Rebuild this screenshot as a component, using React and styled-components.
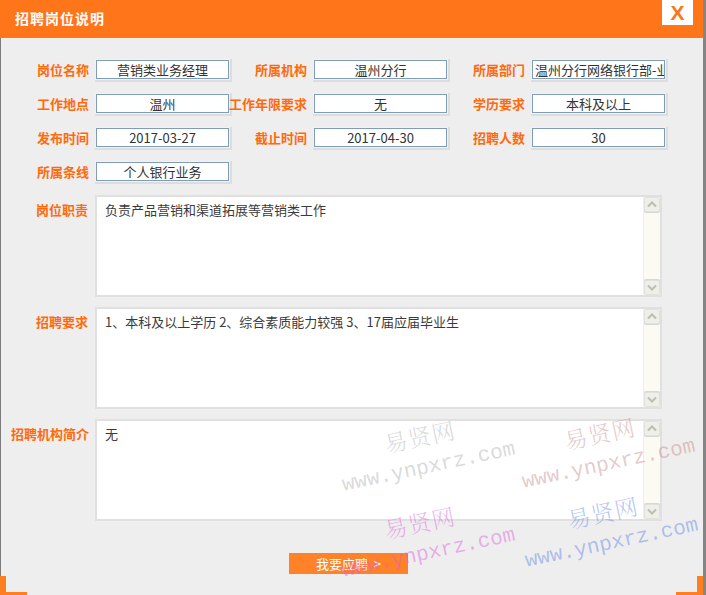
import React from "react";
import styled, { createGlobalStyle } from "styled-components";

const GlobalStyle = createGlobalStyle`
  html, body {
    margin: 0;
    padding: 0;
  }
  body {
    width: 706px;
    height: 595px;
    overflow: hidden;
    background: #858585;
    font-family: "Noto Sans CJK SC", "Liberation Sans", sans-serif;
  }
`;

const Dialog = styled.div`
  position: relative;
  width: 703px;
  height: 595px;
  background: #eeeeee;
  overflow: hidden;
  display: flex;
  flex-direction: column;
`;

const Header = styled.div`
  height: 38px;
  flex-shrink: 0;
  display: flex;
  justify-content: space-between;
  align-items: flex-start;
  padding-left: 15px;
  background: #ff7519;
`;

const Title = styled.h1`
  margin: 0;
  font-size: 14px;
  font-weight: bold;
  line-height: 36px;
  letter-spacing: 1px;
  color: #fff;
`;

const Close = styled.button`
  width: 31px;
  height: 25px;
  margin-right: 10px;
  padding: 0;
  border: 0;
  background: #fff;
  color: #ff7519;
  font-family: "Liberation Sans", Arial, sans-serif;
  font-size: 21px;
  font-weight: bold;
  line-height: 25px;
  cursor: pointer;
`;

const Body = styled.div`
  flex: 1;
  padding: 22px 0 0 10px;
  border-left: 1px solid #7c7c7c;
`;

const FieldGrid = styled.div`
  display: grid;
  grid-template-columns: repeat(3, 218px);
  grid-auto-rows: 19px;
  row-gap: 15px;
`;

const Field = styled.div`
  display: flex;
  align-items: center;
  height: 19px;
`;

const Label = styled.label`
  flex-shrink: 0;
  width: 78px;
  margin-right: 7px;
  text-align: right;
  font-size: 13px;
  font-weight: bold;
  line-height: 19px;
  color: #ff6a0c;
  white-space: nowrap;
`;

const Value = styled.div`
  box-sizing: border-box;
  width: 133px;
  height: 19px;
  padding: 0 2px;
  border: 1px solid #7f9db9;
  background: #fff;
  box-shadow: 0 0 0 1px #f2f2f2, 1px 1px 0 2px #dddddd;
  font-size: 13px;
  line-height: 17px;
  color: #333;
  text-align: ${(p) => (p.$left ? "left" : "center")};
  white-space: nowrap;
  overflow: hidden;
`;

const Blocks = styled.div`
  display: flex;
  flex-direction: column;
  gap: 10px;
  margin-top: 14px;
`;

const BlockRow = styled.div`
  display: flex;
  align-items: flex-start;

  ${Label} {
    width: 77px;
    padding-top: 5px;
  }
`;

const TextBox = styled.div`
  box-sizing: border-box;
  display: flex;
  width: 567px;
  height: 102px;
  border: 2px solid #e0e0e0;
  background: #fff;
`;

const TextContent = styled.div`
  flex: 1;
  padding: 4px 8px;
  font-size: 13px;
  line-height: 17px;
  color: #3a3a3a;
`;

const ScrollTrack = styled.div`
  display: flex;
  flex-direction: column;
  justify-content: space-between;
  width: 16px;
  background: #fbfbf4;
  border-left: 1px solid #f0f0e8;
`;

const ScrollButton = styled.div`
  box-sizing: border-box;
  display: flex;
  align-items: center;
  justify-content: center;
  height: 15px;
  border: 1px solid #e2e2dc;
  border-radius: 2px;
  background: #efefea;
  box-shadow: 0 ${(p) => (p.$down ? "-1px" : "1px")} 0 #d8d8d2;
`;

const ButtonRow = styled.div`
  padding: 29px 0 0 278px;
`;

const ApplyButton = styled.button`
  width: 119px;
  height: 21px;
  padding: 0;
  border: 0;
  background: #ff8228;
  color: #fff;
  font-family: "Noto Sans CJK SC", sans-serif;
  font-size: 13px;
  line-height: 21px;
  cursor: pointer;
`;

const Corner = styled.div`
  position: absolute;
  bottom: 0;
  ${(p) => (p.$right ? "right: 0;" : "left: 0;")}
  width: 27px;
  height: 19px;
  border-bottom: 3px solid #ff7e22;
  ${(p) => (p.$right ? "border-right" : "border-left")}: 6px solid #ff7e22;
  box-sizing: border-box;
`;

const Watermark = styled.div`
  position: absolute;
  display: flex;
  flex-direction: column;
  align-items: flex-start;
  transform: rotate(-12deg);
  transform-origin: 50% 50%;
  color: ${(p) => p.$color};
  pointer-events: none;
`;

const Brand = styled.span`
  margin-left: 50px;
  font-family: "Noto Serif CJK SC", "Noto Sans CJK SC", serif;
  font-size: 23px;
  font-weight: 300;
  line-height: 26px;
  letter-spacing: 1px;
`;

const Site = styled.span`
  margin-top: 8px;
  font-family: "Liberation Mono", monospace;
  font-size: 21px;
  line-height: 22px;
  white-space: nowrap;
`;

const Chevron = ({ down }) => (
  <svg width="10" height="7" viewBox="0 0 10 7">
    <path
      d={down ? "M1 1.5 L5 5.5 L9 1.5" : "M1 5.5 L5 1.5 L9 5.5"}
      fill="none"
      stroke="#bdbdb8"
      strokeWidth="2"
    />
  </svg>
);

const fields = [
  { label: "岗位名称", value: "营销类业务经理" },
  { label: "所属机构", value: "温州分行" },
  { label: "所属部门", value: "温州分行网络银行部-业务", left: true },
  { label: "工作地点", value: "温州" },
  { label: "工作年限要求", value: "无" },
  { label: "学历要求", value: "本科及以上" },
  { label: "发布时间", value: "2017-03-27" },
  { label: "截止时间", value: "2017-04-30" },
  { label: "招聘人数", value: "30" },
  { label: "所属条线", value: "个人银行业务" },
];

const blocks = [
  { label: "岗位职责", text: "负责产品营销和渠道拓展等营销类工作" },
  { label: "招聘要求", text: "1、本科及以上学历 2、综合素质能力较强 3、17届应届毕业生" },
  { label: "招聘机构简介", text: "无" },
];

const marks = [
  { left: 337, top: 423, color: "rgba(160,160,160,0.4)" },
  { left: 517, top: 420, color: "rgba(190,120,120,0.4)" },
  { left: 337, top: 509, color: "rgba(220,90,220,0.45)" },
  { left: 520, top: 499, color: "rgba(90,130,230,0.45)" },
];

export default function App() {
  return (
    <>
      <GlobalStyle />
      <Dialog>
        <Header>
          <Title>招聘岗位说明</Title>
          <Close>X</Close>
        </Header>
        <Body>
          <FieldGrid>
            {fields.map((f) => (
              <Field key={f.label}>
                <Label>{f.label}</Label>
                <Value $left={f.left}>{f.value}</Value>
              </Field>
            ))}
          </FieldGrid>
          <Blocks>
            {blocks.map((b) => (
              <BlockRow key={b.label}>
                <Label>{b.label}</Label>
                <TextBox>
                  <TextContent>{b.text}</TextContent>
                  <ScrollTrack>
                    <ScrollButton>
                      <Chevron />
                    </ScrollButton>
                    <ScrollButton $down>
                      <Chevron down />
                    </ScrollButton>
                  </ScrollTrack>
                </TextBox>
              </BlockRow>
            ))}
          </Blocks>
          <ButtonRow>
            <ApplyButton>我要应聘&nbsp;&nbsp;&gt;</ApplyButton>
          </ButtonRow>
        </Body>
        {marks.map((m, i) => (
          <Watermark key={i} $color={m.color} style={{ left: m.left, top: m.top }}>
            <Brand>易贤网</Brand>
            <Site>www.ynpxrz.com</Site>
          </Watermark>
        ))}
        <Corner />
        <Corner $right />
      </Dialog>
    </>
  );
}
